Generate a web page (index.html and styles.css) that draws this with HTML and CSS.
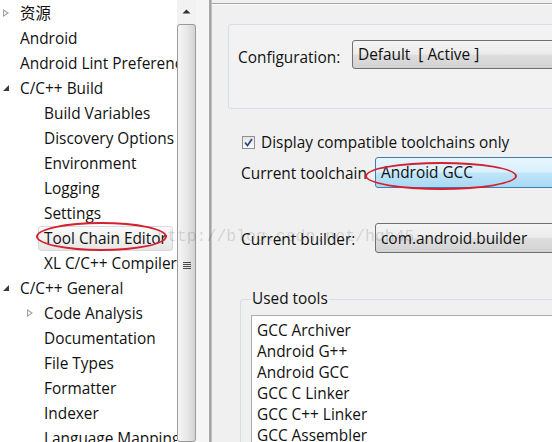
FILE: index.html
```html
<!DOCTYPE html>
<html>
<head>
<meta charset="utf-8">
<link rel="stylesheet" href="styles.css">
</head>
<body>
<div class="window">
  <aside class="tree">
    <ul class="tree-list">
      <li class="row lvl0"><span class="twisty closed"></span><span class="label">资源</span></li>
      <li class="row lvl0"><span class="twisty"></span><span class="label">Android</span></li>
      <li class="row lvl0"><span class="twisty"></span><span class="label">Android Lint Preferences</span></li>
      <li class="row lvl0"><span class="twisty open"></span><span class="label">C/C++ Build</span></li>
      <li class="row lvl1"><span class="twisty"></span><span class="label">Build Variables</span></li>
      <li class="row lvl1"><span class="twisty"></span><span class="label">Discovery Options</span></li>
      <li class="row lvl1"><span class="twisty"></span><span class="label">Environment</span></li>
      <li class="row lvl1"><span class="twisty"></span><span class="label">Logging</span></li>
      <li class="row lvl1"><span class="twisty"></span><span class="label">Settings</span></li>
      <li class="row lvl1"><span class="twisty"></span><span class="label selected">Tool Chain Editor</span></li>
      <li class="row lvl1"><span class="twisty"></span><span class="label">XL C/C++ Compiler</span></li>
      <li class="row lvl0"><span class="twisty open"></span><span class="label">C/C++ General</span></li>
      <li class="row lvl1"><span class="twisty closed"></span><span class="label">Code Analysis</span></li>
      <li class="row lvl1"><span class="twisty"></span><span class="label">Documentation</span></li>
      <li class="row lvl1"><span class="twisty"></span><span class="label">File Types</span></li>
      <li class="row lvl1"><span class="twisty"></span><span class="label">Formatter</span></li>
      <li class="row lvl1"><span class="twisty"></span><span class="label">Indexer</span></li>
      <li class="row lvl1"><span class="twisty"></span><span class="label">Language Mappings</span></li>
    </ul>
  </aside>
  <div class="vscroll">
    <div class="up-btn">
      <svg width="9" height="5" viewBox="0 0 9 5"><path d="M0.5 4.5 L4.5 0.5 L8.5 4.5 Z" fill="#303030"/></svg>
    </div>
    <div class="thumb">
      <div class="grip"><span></span><span></span><span></span><span></span></div>
    </div>
  </div>
  <div class="gutter"></div>
  <div class="sash"></div>
  <main class="page">
    <div class="topline"></div>
    <section class="group config-group">
      <span class="field-label config-label">Configuration:</span>
      <div class="combo combo-gray">Default&nbsp; [ Active ]</div>
    </section>
    <div class="check-row">
      <span class="checkbox">
        <svg width="11" height="11" viewBox="0 0 11 11"><path d="M2 5.5 L4.5 8.5 L9 2" fill="none" stroke="#2a4d8f" stroke-width="1.8"/></svg>
      </span>
      <span class="check-text">Display compatible toolchains only</span>
    </div>
    <div class="field-row toolchain-row">
      <span class="field-label wide-label">Current toolchain</span>
      <div class="combo combo-blue">Android GCC</div>
    </div>
    <div class="field-row builder-row">
      <span class="field-label wide-label">Current builder:</span>
      <div class="combo combo-gray">com.android.builder</div>
    </div>
    <fieldset class="used-tools">
      <legend>Used tools</legend>
      <ul class="tool-list">
        <li>GCC Archiver</li>
        <li>Android G++</li>
        <li>Android GCC</li>
        <li>GCC C Linker</li>
        <li>GCC C++ Linker</li>
        <li>GCC Assembler</li>
      </ul>
    </fieldset>
  </main>
  <div class="watermark">http://blog.csdn.net/hqh45</div>
  <div class="ellipse ellipse-tree"></div>
  <div class="ellipse ellipse-toolchain"></div>
</div>
</body>
</html>
```

FILE: styles.css
```css
* { box-sizing: border-box; }
html, body { margin: 0; padding: 0; }
body {
  font-family: "Open Sans", "Noto Sans CJK SC", sans-serif;
  font-size: 15.4px;
  color: #111111;
  background: #f0f0f0;
}
.window {
  position: relative;
  width: 552px;
  height: 442px;
  overflow: hidden;
  display: flex;
  background: #f0f0f0;
}

/* tree */
.tree {
  width: 177px;
  flex: none;
  background: #ffffff;
  overflow: hidden;
}
.tree-list {
  list-style: none;
  margin: 0;
  padding: 1px 0 0 0;
}
.row {
  height: 25px;
  display: flex;
  align-items: center;
  white-space: nowrap;
}
.lvl0 { padding-left: 0; }
.lvl1 { padding-left: 24px; }
.twisty {
  width: 20px;
  height: 25px;
  flex: none;
  position: relative;
}
.twisty.closed::before {
  content: "";
  position: absolute;
  left: 3px;
  top: 8px;
  width: 0;
  height: 0;
  border-top: 4px solid transparent;
  border-bottom: 4px solid transparent;
  border-left: 6px solid #a0a0a0;
}
.twisty.closed::after {
  content: "";
  position: absolute;
  left: 4px;
  top: 10px;
  width: 0;
  height: 0;
  border-top: 2px solid transparent;
  border-bottom: 2px solid transparent;
  border-left: 3px solid #ffffff;
}
.twisty.open::before {
  content: "";
  position: absolute;
  left: 3px;
  top: 9px;
  width: 0;
  height: 0;
  border-left: 6px solid transparent;
  border-bottom: 6px solid #3a3a3a;
}
.label { line-height: 24px; }
.label.selected {
  margin-left: -6px;
  padding: 0 5px;
  height: 25px;
  line-height: 23px;
  border: 1px solid #d9d9d9;
  border-radius: 3px;
  background: linear-gradient(#fafafa, #e6e6e6);
}

/* scrollbar */
.vscroll {
  width: 19px;
  flex: none;
  background: #ececec;
  display: flex;
  flex-direction: column;
}
.up-btn {
  height: 24px;
  display: flex;
  justify-content: center;
  padding-top: 9px;
  background: #f2f2f2;
}
.thumb {
  flex: 1;
  border: 1px solid #9a9a9a;
  border-radius: 3px;
  background: linear-gradient(to right, #f6f6f6, #e8e8e8 50%, #d4d4d4);
  display: flex;
  justify-content: center;
  padding-top: 237px;
}
.grip {
  display: flex;
  flex-direction: column;
  gap: 1px;
}
.grip span {
  width: 8px;
  height: 1px;
  background: #4a4a4a;
}
.gutter {
  width: 13px;
  flex: none;
  background: #f5f5f5;
}
.sash {
  width: 3px;
  flex: none;
  background: linear-gradient(to right, #b0b0b0, #9c9c9c 60%, #e0e0e0);
}

/* page */
.page {
  flex: 1;
  min-width: 0;
  padding-top: 3px;
}
.topline {
  height: 2px;
  margin-right: -10px;
  border-top: 1px solid #a6a6a6;
  border-bottom: 1px solid #fafafa;
}
.group {
  border: 1px solid #d5dfe5;
  border-radius: 3px;
}
.config-group {
  margin: 19px -10px 0 16px;
  height: 85px;
  padding: 15px 0 0 9px;
  display: flex;
  align-items: flex-start;
  background: #f2f2f2;
}
.field-label { white-space: nowrap; }
.config-label {
  width: 114px;
  flex: none;
  line-height: 29px;
  padding-top: 3px;
}
.combo {
  flex: 1;
  min-width: 0;
  margin-right: -10px;
  white-space: nowrap;
  padding: 1px 0 0 5px;
  border-radius: 3px;
}
.combo-gray {
  height: 29px;
  line-height: 26px;
  border: 1px solid #707070;
  background: linear-gradient(#f4f4f4 0%, #ececec 48%, #dedede 52%, #d2d2d2 100%);
}
.combo-blue {
  height: 31px;
  line-height: 28px;
  border: 1px solid #3c7fb1;
  background: linear-gradient(#e8f5fd 0%, #d9f0fc 48%, #bfe5fa 52%, #a9d9f3 100%);
}
.check-row {
  margin: 24px 0 0 30px;
  height: 18px;
  display: flex;
  align-items: center;
  gap: 6px;
}
.checkbox {
  width: 13px;
  height: 13px;
  flex: none;
  border: 1px solid #8f8f8f;
  background: linear-gradient(#e6e6e6, #fbfbfb);
  display: flex;
  align-items: center;
  justify-content: center;
}
.field-row {
  display: flex;
  align-items: center;
  padding-left: 29px;
}
.toolchain-row { margin-top: 6px; }
.builder-row { margin-top: 35px; }
.builder-row .combo { height: 30px; line-height: 27px; }
.wide-label {
  width: 134px;
  flex: none;
  overflow: hidden;
  padding-top: 2px;
}

/* used tools */
.used-tools {
  margin: 36px -10px 0 28px;
  padding: 0 0 0 10px;
  border: 1px solid #d5dfe5;
  border-radius: 3px;
  height: 200px;
  min-width: 0;
}
.used-tools legend {
  padding: 0 1px;
  line-height: 20px;
}
.tool-list {
  list-style: none;
  margin: 6px 0 0 0;
  padding: 4px 0 0 5px;
  background: #ffffff;
  border: 1px solid #abadb3;
  height: 200px;
}
.tool-list li {
  line-height: 21px;
  height: 21px;
  white-space: nowrap;
}

/* overlays */
.watermark {
  position: absolute;
  left: 157px;
  top: 227px;
  font-family: "Liberation Mono", monospace;
  font-size: 16.5px;
  color: rgba(0, 0, 0, 0.14);
  white-space: nowrap;
  pointer-events: none;
}
.ellipse {
  position: absolute;
  border: 2px solid #d42030;
  border-radius: 50%;
  pointer-events: none;
}
.ellipse-tree {
  left: 36px;
  top: 222px;
  width: 131px;
  height: 29px;
}
.ellipse-toolchain {
  left: 365px;
  top: 162px;
  width: 152px;
  height: 28px;
}
```
